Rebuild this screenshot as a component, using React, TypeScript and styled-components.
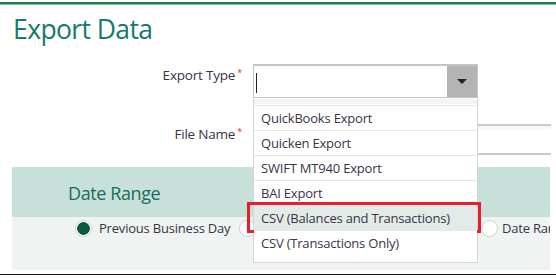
import styled, { createGlobalStyle } from "styled-components";

const GlobalStyle = createGlobalStyle`
  html, body {
    margin: 0;
    padding: 0;
    background: #fff;
  }
  body {
    font-family: "Open Sans", "Noto Sans", sans-serif;
    color: #333;
  }
`;

const Page = styled.div`
  width: 556px;
  height: 278px;
  overflow: hidden;
  position: relative;
  padding-top: 2px;
  box-sizing: border-box;
`;

const TopBar = styled.div`
  height: 2px;
  background: #24784f;
  border-bottom: 1px solid #86b99e;
`;

const Title = styled.h1`
  margin: 6px 0 0 13px;
  font-size: 26.5px;
  line-height: 36px;
  font-weight: 400;
  letter-spacing: -0.6px;
  color: #17796d;
`;

const Form = styled.div`
  width: 551px;
  margin-top: 17px;
  display: flex;
  flex-direction: column;
  gap: 26px;
`;

const FieldRow = styled.div`
  display: grid;
  grid-template-columns: 242px 1fr;
  column-gap: 11px;
  align-items: center;
`;

const Label = styled.label`
  text-align: right;
  font-size: 13.5px;
  color: #3a3346;
  letter-spacing: -0.2px;
  position: relative;
  top: -6px;
`;

const Req = styled.sup`
  color: #e02b2b;
  font-size: 9px;
  margin-left: 2px;
  vertical-align: 4px;
  line-height: 0;
`;

const SelectWrap = styled.div`
  position: relative;
  width: 225px;
`;

const SelectBox = styled.div`
  height: 34px;
  box-sizing: border-box;
  border: 1px solid #c4c4c4;
  border-top-width: 2px;
  background: #fff;
  display: flex;
  align-items: center;
  padding-left: 2px;
`;

const Caret = styled.span`
  width: 1px;
  height: 20px;
  background: #222;
  margin-top: 2px;
`;

const SelectButton = styled.div`
  margin-left: auto;
  width: 30px;
  height: 100%;
  background: #b4b4b4;
  display: flex;
  align-items: center;
  justify-content: center;
`;

const Triangle = styled.span`
  width: 0;
  height: 0;
  border-left: 5px solid transparent;
  border-right: 5px solid transparent;
  border-top: 5px solid #222;
`;

const Menu = styled.ul`
  position: absolute;
  top: 35px;
  left: 0;
  width: 225px;
  box-sizing: border-box;
  margin: 0;
  padding: 6px 0 7px;
  list-style: none;
  background: #fff;
  border: 1px solid #d6d6d6;
  border-top: none;
  z-index: 2;

  &::before {
    content: "";
    position: absolute;
    top: 0;
    left: 0;
    right: 0;
    height: 5px;
    background: #f4f4f4;
  }
`;

const MenuItem = styled.li<{ $active?: boolean }>`
  position: relative;
  height: 24px;
  line-height: 24px;
  padding-left: 7px;
  font-size: 13px;
  letter-spacing: -0.2px;
  color: #3a3346;
  border-top: 1px solid #e8e8e8;
  background: ${(p) => (p.$active ? "#e3ebe8" : "#fff")};
  ${(p) =>
    p.$active &&
    `
    &::after {
      content: "";
      position: absolute;
      left: -7px;
      right: -4px;
      top: -4px;
      bottom: -3px;
      border: 3px solid #e3202b;
    }
  `}
`;

const TextInput = styled.div`
  height: 31px;
  box-sizing: border-box;
  border-top: 2px solid #c8c8c8;
  border-bottom: 2px solid #c8c8c8;
  border-left: 1px solid #d0d0d0;
  background: linear-gradient(#f4f4f4, #fff 6px);
`;

const Section = styled.div`
  width: 538px;
  margin: 12px 0 0 12px;
`;

const SectionHead = styled.h2`
  margin: 0;
  height: 50px;
  box-sizing: border-box;
  padding: 14px 0 0 56px;
  background: #c7e0d9;
  font-size: 18px;
  line-height: 24px;
  font-weight: 400;
  letter-spacing: -0.4px;
  color: #1c6b5c;
`;

const SectionBody = styled.div`
  height: 53px;
  background: #eff4f2;
  padding-top: 2px;
  box-sizing: border-box;
`;

const RadioRow = styled.div`
  display: grid;
  grid-template-columns: 164px 242px auto;
  padding-left: 63px;
  white-space: nowrap;
  overflow: hidden;
`;

const RadioOption = styled.label<{ $tight?: boolean }>`
  display: flex;
  align-items: center;
  gap: ${(p) => (p.$tight ? "4px" : "7px")};
  font-size: 13px;
  letter-spacing: -0.2px;
  color: #3a3346;
`;

const RadioDot = styled.span<{ $checked?: boolean }>`
  width: 17px;
  height: 17px;
  box-sizing: border-box;
  border-radius: 50%;
  border: 1px solid #cfcfcf;
  background: ${(p) =>
    p.$checked ? "radial-gradient(circle, #0b5a3d 0 6px, #fff 6.6px)" : "#fff"};
  flex-shrink: 0;
`;

const BottomRule = styled.div`
  position: absolute;
  left: 0;
  right: 0;
  top: 274px;
  height: 1px;
  background: #111;
`;

const exportTypes = [
  "QuickBooks Export",
  "Quicken Export",
  "SWIFT MT940 Export",
  "BAI Export",
  "CSV (Balances and Transactions)",
  "CSV (Transactions Only)",
];

export default function App() {
  return (
    <Page>
      <GlobalStyle />
      <TopBar />
      <Title>Export Data</Title>
      <Form>
        <FieldRow>
          <Label>
            Export Type<Req>*</Req>
          </Label>
          <SelectWrap>
            <SelectBox>
              <Caret />
              <SelectButton>
                <Triangle />
              </SelectButton>
            </SelectBox>
            <Menu>
              {exportTypes.map((t) => (
                <MenuItem key={t} $active={t === "CSV (Balances and Transactions)"}>
                  {t}
                </MenuItem>
              ))}
            </Menu>
          </SelectWrap>
        </FieldRow>
        <FieldRow>
          <Label>
            File Name<Req>*</Req>
          </Label>
          <TextInput />
        </FieldRow>
      </Form>
      <Section>
        <SectionHead>Date Range</SectionHead>
        <SectionBody>
          <RadioRow>
            <RadioOption>
              <RadioDot $checked />
              Previous Business Day
            </RadioOption>
            <RadioOption>
              <RadioDot />
              Current Business Day
            </RadioOption>
            <RadioOption $tight>
              <RadioDot />
              Date Range
            </RadioOption>
          </RadioRow>
        </SectionBody>
      </Section>
      <BottomRule />
    </Page>
  );
}
